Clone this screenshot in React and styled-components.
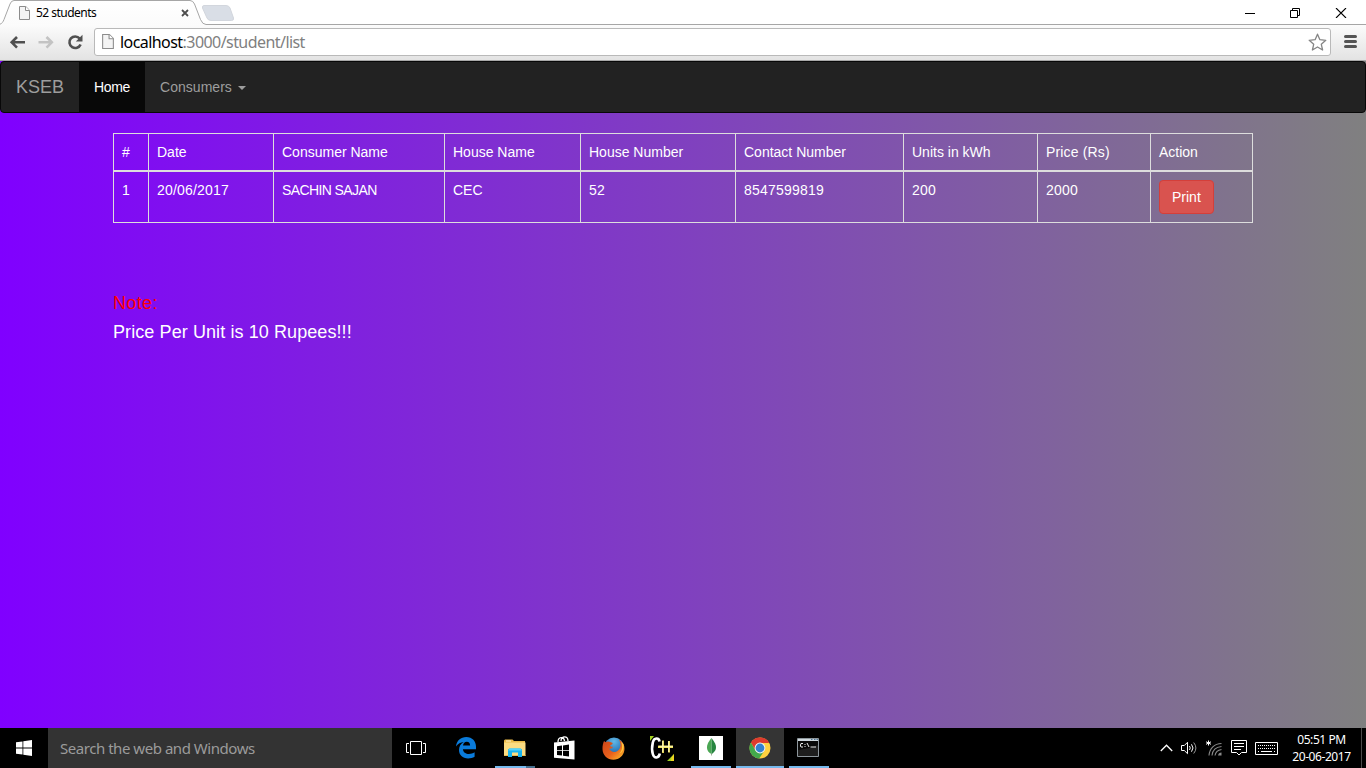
import React from "react";
import styled, { createGlobalStyle, css } from "styled-components";

const ui = `"Noto Sans", "Open Sans", sans-serif`;

const GlobalStyle = createGlobalStyle`
  *, *::before, *::after { box-sizing: border-box; }
  html, body { margin: 0; padding: 0; }
  body { overflow: hidden; font: 14px/20px "Liberation Sans", Arial, sans-serif; }
  svg { display: block; flex: none; }
`;

const Screen = styled.div`
  width: 1366px;
  height: 768px;
  display: flex;
  flex-direction: column;
  overflow: hidden;
`;

/* ---------- browser frame ---------- */

const TabStrip = styled.header`
  height: 24px;
  flex: none;
  display: flex;
  background: #fff;
  position: relative;
`;

const TabShape = styled.svg`
  position: absolute;
  left: 0;
  top: 0;
`;

const Tab = styled.div`
  position: relative;
  width: 1236px;
  height: 26px;
  display: flex;
  align-items: center;
  padding-left: 19px;
`;

const TabTitle = styled.span`
  font: 12px/16px ${ui};
  letter-spacing: -0.53px;
  color: #000;
  width: 145px;
  margin-left: 6px;
`;

const WindowControls = styled.div`
  position: relative;
  display: flex;
  align-items: center;
  height: 26px;
  padding-left: 9px;
  gap: 35px;
`;

const Toolbar = styled.div`
  height: 37px;
  flex: none;
  display: flex;
  align-items: center;
  padding: 0 9px 1px 9px;
  background: linear-gradient(#fcfcfc, #e3e3e3);
  border-bottom: 1px solid #a9a9a9;
`;

const NavIcons = styled.div`
  display: flex;
  gap: 13px;
  width: 85px;
  position: relative;
`;

const AddressBar = styled.div`
  width: 1237px;
  height: 28px;
  display: flex;
  align-items: center;
  padding: 0 3px 0 7px;
  border: 1px solid #b9b9b9;
  border-radius: 3px;
  background: #fff;
`;

const Url = styled.span`
  flex: 1;
  margin-left: 6px;
  font: 16px/22px ${ui};
  letter-spacing: -0.56px;
  color: #808080;
  b { font-weight: 400; color: #000; }
`;

const MenuIcon = styled.svg`
  margin-left: 13px;
`;

/* ---------- web page ---------- */

const Page = styled.main`
  flex: 1;
  background: linear-gradient(to right, #8000ff, #808080);
  color: #fff;
`;

const Navbar = styled.nav`
  height: 52px;
  display: flex;
  background: #222;
  border: 1px solid #080808;
  border-radius: 4px;
  margin-bottom: 20px;
`;

const Brand = styled.span`
  padding: 15px;
  font-size: 18px;
  line-height: 20px;
  color: #9d9d9d;
`;

const NavItem = styled.span`
  display: flex;
  align-items: center;
  padding: 0 15px;
  letter-spacing: ${(p) => (p.$active ? "-0.34px" : "0.03px")};
  color: ${(p) => (p.$active ? "#fff" : "#9d9d9d")};
  background: ${(p) => (p.$active ? "#080808" : "transparent")};
`;

const Caret = styled.i`
  margin: 2px 0 0 6px;
  border-top: 4px solid currentColor;
  border-left: 4px solid transparent;
  border-right: 4px solid transparent;
`;

const Container = styled.div`
  width: 1140px;
  margin: 0 auto;
`;

const Table = styled.table`
  table-layout: fixed;
  width: 1140px;
  border-spacing: 0;
  margin-bottom: 70px;
`;

const cell = css`
  padding: 8px;
  border: 0 solid #ddd;
  border-left-width: 1px;
  text-align: left;
  vertical-align: top;
  font-weight: 400;
  letter-spacing: ${(p) => p.$tracking || 0}px;
  &:last-child { border-right-width: 1px; }
`;

const HeadCell = styled.th`
  ${cell}
  width: ${(p) => p.$width}px;
  border-top-width: 1px;
  border-bottom-width: 2px;
`;

const Cell = styled.td`
  ${cell}
  border-bottom-width: 1px;
`;

const PrintButton = styled.button`
  display: block;
  height: 34px;
  padding: 6px 12px;
  font: inherit;
  color: #fff;
  background: #d9534f;
  border: 1px solid #d43f3a;
  border-radius: 4px;
`;

const Note = styled.p`
  margin: 0 0 9px;
  font-size: 18px;
  line-height: 20px;
  letter-spacing: ${(p) => (p.$alert ? 0.35 : 0.09)}px;
  color: ${(p) => (p.$alert ? "red" : "#fff")};
`;

/* ---------- taskbar ---------- */

const Taskbar = styled.footer`
  height: 40px;
  flex: none;
  display: flex;
  background: #000;
`;

const TaskButton = styled.div`
  width: 48px;
  height: 40px;
  display: flex;
  align-items: center;
  justify-content: center;
  position: relative;
  background: ${(p) => (p.$active ? "#343434" : "transparent")};
  &::after {
    content: "";
    display: ${(p) => (p.$open ? "block" : "none")};
    position: absolute;
    bottom: 0;
    left: ${(p) => (p.$active ? 0 : 4)}px;
    right: ${(p) => (p.$active ? 0 : 4)}px;
    height: 2px;
    background: ${(p) =>
      p.$stacked ? "linear-gradient(to right, #76b9ed 31px, #46708f 31px)" : "#76b9ed"};
  }
`;

const Search = styled.div`
  width: 344px;
  padding-left: 12px;
  font: 15px/41px ${ui};
  letter-spacing: -0.46px;
  color: #9b9b9b;
  background: #333;
`;

const Apps = styled.div`
  display: flex;
  gap: 1px;
  margin-left: 2px;
`;

const Tray = styled.div`
  margin-left: auto;
  display: flex;
  align-items: center;
  gap: 8px;
`;

const Clock = styled.div`
  width: 71px;
  font: 12px/17px ${ui};
  letter-spacing: -0.42px;
  text-align: center;
  color: #fff;
  white-space: nowrap;
  padding-bottom: 1px;
`;

const ShowDesktop = styled.div`
  width: 5px;
  height: 40px;
  margin-left: -4px;
  border-left: 1px solid #4a4a4a;
`;

const PageIcon = ({ w = 11, h = 14 }) => (
  <svg width={w} height={h} viewBox="0 0 11 14">
    <path d="M.5.5h6.300l3.700 3.700v9.300H.5z" fill="#f4f4f4" stroke="#8c8c8c" />
    <path d="M6.500.5v4h4" fill="#fff" stroke="#8c8c8c" />
  </svg>
);

const columns = [
  { name: "#", width: 35, value: "1" },
  { name: "Date", width: 125, value: "20/06/2017", tracking: 0.2 },
  { name: "Consumer Name", width: 171, value: "SACHIN SAJAN", tracking: -0.6 },
  { name: "House Name", width: 136, value: "CEC" },
  { name: "House Number", width: 155, value: "52", tracking: 0.2 },
  { name: "Contact Number", width: 168, value: "8547599819", tracking: 0.2 },
  { name: "Units in kWh", width: 134, value: "200", tracking: 0.2 },
  { name: "Price (Rs)", width: 113, value: "2000", tracking: 0.2, headTracking: 0.15 },
  { name: "Action", width: 103 },
];

const WindowsLogo = () => (
  <svg width="16" height="16" viewBox="0 0 16 16" fill="#fff">
    <path d="M0 2.300l6.500-.9v6.100H0zM7.300 1.300L16 0v7.500H7.300zM0 8.400h6.500v6.200L0 13.700zM7.300 8.400H16V16l-8.700-1.200z" />
  </svg>
);

const TaskViewIcon = () => (
  <svg width="20" height="14" viewBox="0 0 20 14" fill="none" stroke="#fff">
    <path d="M4.500.5h11v13h-11zM3 2.500H.5v9H3M17 2.500h2.500v9H17" />
  </svg>
);

const EdgeIcon = () => (
  <svg width="20" height="22" viewBox="0 0 20 22">
    <path
      d="M0 9.500C.7 3.500 4.800 0 10.300 0c6 0 9.700 4.300 9.700 9.800v2.400H6.900c.3 3.200 3 4.700 6 4.700 2.200 0 4-.6 5.700-1.600v4.500c-1.900 1.100-4 1.600-6.500 1.600C6.600 21.400 3 18 3 13c0-3.500 1.700-6.300 4.700-8C4.800 5.200 1.700 6.700 0 9.500zm7-1h7.100c0-2.400-1.100-3.800-3.300-3.800-2.100 0-3.500 1.500-3.800 3.800z"
      fill="#0a7bdb"
    />
  </svg>
);

const ExplorerIcon = () => (
  <svg width="22" height="19" viewBox="0 0 22 19">
    <path d="M0 1.500L1 .5h7.500L10 2h11v4H0z" fill="#e9b949" />
    <path d="M2 1.500h5v1H2z" fill="#fff4cf" />
    <path d="M0 3.500h21.500V17H0z" fill="#fbdc82" />
    <path d="M0 16h21.500v1H0z" fill="#e8bd50" />
    <path d="M4 10.500L5.500 9.500h11l1.500 1V18h-4v-4.500H8V18H4z" fill="#18b4ef" />
    <path d="M4 11.500L5.500 9.500h11l1.500 2z" fill="#56d3fa" />
  </svg>
);

const StoreIcon = () => (
  <svg width="22" height="24" viewBox="0 0 22 24">
    <path d="M5 6C5 .5 11 .2 11.500 5M8 5C8-.5 15-.5 15 5" fill="none" stroke="#fff" strokeWidth="1.300" />
    <path d="M1 6.500L21.500 4.500v19L1 21.800z" fill="#fff" />
    <path d="M4 10.300l5-.7v4.600H4zM10 9.500l6-.9v5.600h-6zM4 15.100h5v4.500l-5-.6zM10 15.100h6v5.400l-6-.8z" fill="#000" />
  </svg>
);

const FirefoxIcon = () => (
  <svg width="23" height="23" viewBox="0 0 23 23">
    <defs>
      <linearGradient id="fox" x1="0" y1="0" x2="1" y2="1">
        <stop offset="0" stopColor="#c9441a" />
        <stop offset=".55" stopColor="#e8601c" />
        <stop offset="1" stopColor="#ffc52c" />
      </linearGradient>
      <radialGradient id="globe" cx=".5" cy=".2" r=".9">
        <stop offset="0" stopColor="#63b9e7" />
        <stop offset=".6" stopColor="#2673b7" />
        <stop offset="1" stopColor="#143a73" />
      </radialGradient>
    </defs>
    <circle cx="12" cy="10.500" r="10" fill="url(#globe)" />
    <path
      d="M2 4l1.700 1.200C5 4.200 7 4.200 8.200 5.100L10.700 6c-.2 1.500-1.400 1.800-2.700 2.500.5 1.100 1.500 1.500 3 1.300-.6 1.800-2.200 2.200-3.800 1.800 1.200 3.400 5.500 4.600 8.600 2.200 3.200-2.600 3.500-7.300 1.200-11.100C21 4.700 23 8.300 22.400 13c-.8 6-5.400 9.700-11 9.700C5.300 22.700.6 18.200.5 12 .4 9 1 6 2 4z"
      fill="url(#fox)"
    />
    <path d="M19 5c1.800 4 1.400 9-2 12 3.800-1.500 5.300-5.700 4.600-9-.4-1.300-1.300-2.400-2.600-3z" fill="#ffc73a" />
  </svg>
);

const CppIcon = () => (
  <svg width="26" height="25" viewBox="0 0 26 25">
    <path d="M1 0h4L1 5zM25 18v7h-7z" fill="#a3d321" />
    <path d="M10.500 5.500C10 1.500 5 1 3.800 6.500c-1 4.500-1 8 0 11.500 1.500 5 6 4.500 7-.5" fill="none" stroke="#fff" strokeWidth="2.600" />
    <path d="M9 10.800h15" stroke="#f5e65b" strokeWidth="2.400" />
    <path d="M14 4.500V17M20 5v11.500" stroke="#f5e65b" strokeWidth="1.800" />
    <path d="M10 10.300h14M19.700 5v11M13.700 5v11" stroke="#fffbd0" strokeWidth=".8" />
    <path d="M22.500 21.500L25 18v7h-3z" fill="#f1d521" />
  </svg>
);

const MongoIcon = () => (
  <svg width="24" height="24" viewBox="0 0 24 24">
    <path d="M0 0h24v24H0z" fill="#fff" />
    <path d="M12.500 2C9 6.500 7.800 9 8 12c.2 2.700 2 5 4.500 6z" fill="#4aa653" />
    <path d="M12.500 2c3.400 4.200 4.800 6.900 4.500 10-.3 2.600-2.300 5-4.500 6.200z" fill="#278540" />
    <path d="M12.500 17.500v2" stroke="#8c9a80" strokeWidth=".8" />
  </svg>
);

const ChromeIcon = () => (
  <svg width="22" height="22" viewBox="0 0 22 22">
    <circle cx="11" cy="11" r="10.500" fill="#ffd13f" />
    <path d="M1.900 5.500A10.500 10.500 0 0 1 20.200 6H11L6.200 13z" fill="#df3b2e" />
    <path d="M1.900 5.500A10.500 10.500 0 0 0 10.200 21.500L15.500 13.500 6.500 13.500z" fill="#43a84b" />
    <circle cx="11" cy="11" r="5.400" fill="#f4f4f4" />
    <circle cx="11" cy="11" r="4.400" fill="#3481d1" />
  </svg>
);

const ConsoleIcon = () => (
  <svg width="24" height="20" viewBox="0 0 24 20">
    <path d="M.5.500h21v18H.5z" fill="#080808" stroke="#8d969c" />
    <path d="M1 1h20v2H1z" fill="#cfd8de" />
    <path d="M14 1.500h1.500M17 1.500h1.500M19.500 1.500H21" stroke="#4f7798" />
    <path d="M6 5.500H4L3.500 7v1L4 9h2M8 6v1M8 8v1M10 5l2 4M13.500 9H19" stroke="#e8e8e8" fill="none" />
    <path d="M1 12C7 11 15 10 21 7v11H1z" fill="#fff" opacity=".09" />
  </svg>
);

export default function App() {
  return (
    <Screen>
      <GlobalStyle />
      <TabStrip>
        <TabShape width="1366" height="25" viewBox="0 0 1366 25">
          <defs>
            <linearGradient id="tab" x1="0" y1="0" x2="0" y2="1">
              <stop offset="0" stopColor="#fff" />
              <stop offset="1" stopColor="#fbfbfb" />
            </linearGradient>
          </defs>
          <path d="M0 24.500C2 24 3 22 4 19.500L10 4Q11.300.5 14 .5H190Q193 .5 194.500 4L200.500 19.500Q202.500 24.500 206 24.500z" fill="url(#tab)" />
          <path d="M0 24.200C2 23.500 3 22 4 19.500L10 4Q11.300.5 14 .5H190Q193 .5 194.500 4L200.500 19.500Q202.500 24.500 206 24.500H1366" fill="none" stroke="#a6a6a6" />
          <path d="M204 5.500H226Q229 5.500 230 8L233.500 18Q234 20.500 231.500 20.500H211Q208 20.500 207 18L202.500 8Q202 5.500 204 5.500z" fill="#d9dee6" stroke="#d2d6dd" />
        </TabShape>
        <Tab>
          <PageIcon />
          <TabTitle>52 students</TabTitle>
          <svg width="8" height="8" viewBox="0 0 8 8" stroke="#4d4d4d" strokeWidth="1.800">
            <path d="M1 1l6 6M7 1L1 7" />
          </svg>
        </Tab>
        <WindowControls>
          <svg width="10" height="10"><path d="M0 5.500h10" stroke="#000" /></svg>
          <svg width="10" height="10" fill="none" stroke="#000">
            <path d="M.5 2.500h7v7h-7zM2.500 2.500v-2h7v7h-2" />
          </svg>
          <svg width="12" height="10" stroke="#000" strokeWidth="1.100"><path d="M1 0l10 10M11 0L1 10" /></svg>
        </WindowControls>
      </TabStrip>

      <Toolbar>
        <NavIcons>
          <svg width="16" height="16" viewBox="0 0 16 16" fill="none" stroke="#505050" strokeWidth="2.600">
            <path d="M8 3L2.700 8.300 8 13.600M3 8.300h13" />
          </svg>
          <svg width="16" height="16" viewBox="0 0 16 16" fill="none" stroke="#c3c3c3" strokeWidth="2.600">
            <path d="M8.500 3L13.800 8.300 8.500 13.600M13.500 8.300H.5" />
          </svg>
          <svg width="16" height="16" viewBox="0 0 16 16">
            <path d="M12.700 4.500A5.800 5.800 0 1 0 13.600 10.500" fill="none" stroke="#505050" strokeWidth="2.600" />
            <path d="M15.500.8v6.700H8.800z" fill="#505050" />
          </svg>
        </NavIcons>
        <AddressBar>
          <PageIcon w={12} h={15} />
          <Url><b>localhost</b>:3000/student/list</Url>
          <svg width="19" height="18" viewBox="0 0 19 18">
            <path d="M9.500 1.200l2.400 5.500 5.900.6-4.500 4 1.300 5.700-5.100-3-5.100 3 1.300-5.700-4.500-4 5.900-.6z" fill="#fff" stroke="#858585" strokeWidth="1.300" strokeLinejoin="round" />
          </svg>
        </AddressBar>
        <MenuIcon width="13" height="13" viewBox="0 0 13 13" stroke="#555" strokeWidth="3" strokeLinecap="round">
          <path d="M1.500 1.500h10M1.500 6.500h10M1.500 11.500h10" />
        </MenuIcon>
      </Toolbar>

      <Page>
        <Navbar>
          <Brand>KSEB</Brand>
          <NavItem $active>Home</NavItem>
          <NavItem>Consumers<Caret /></NavItem>
        </Navbar>
        <Container>
          <Table>
            <thead>
              <tr>
                {columns.map((c) => (
                  <HeadCell key={c.name} $width={c.width} $tracking={c.headTracking}>{c.name}</HeadCell>
                ))}
              </tr>
            </thead>
            <tbody>
              <tr>
                {columns.map((c) => (
                  <Cell key={c.name} $tracking={c.tracking}>
                    {c.value ?? <PrintButton>Print</PrintButton>}
                  </Cell>
                ))}
              </tr>
            </tbody>
          </Table>
          <Note $alert>Note:</Note>
          <Note>Price Per Unit is 10 Rupees!!!</Note>
        </Container>
      </Page>

      <Taskbar>
        <TaskButton><WindowsLogo /></TaskButton>
        <Search>Search the web and Windows</Search>
        <TaskButton><TaskViewIcon /></TaskButton>
        <Apps>
          <TaskButton><EdgeIcon /></TaskButton>
          <TaskButton $open $stacked><ExplorerIcon /></TaskButton>
          <TaskButton><StoreIcon /></TaskButton>
          <TaskButton><FirefoxIcon /></TaskButton>
          <TaskButton><CppIcon /></TaskButton>
          <TaskButton $open><MongoIcon /></TaskButton>
          <TaskButton $open $active><ChromeIcon /></TaskButton>
          <TaskButton $open><ConsoleIcon /></TaskButton>
        </Apps>
        <Tray>
          <svg width="13" height="8" fill="none" stroke="#fff" strokeWidth="1.300"><path d="M.8 7L6.500 1.200 12.200 7" /></svg>
          <svg width="17" height="14" viewBox="0 0 17 14" fill="none" stroke="#fff">
            <path d="M.5 4.500h2.800L6.500 1.300v11.400L3.300 9.500H.5zM8.500 5q1.500 2 0 4M10.500 3.300q3 3.700 0 7.400" />
            <path d="M12.700 1.500q4.400 5.500 0 11" stroke="#999" />
          </svg>
          <svg width="17" height="17" viewBox="0 0 17 17" fill="none">
            <path d="M2.500.5v5M0 1.800l5 2.500M5 1.800L0 4.300" stroke="#fff" />
            <path d="M3 15.500C3.500 8.500 8.500 3.500 15.500 3.500M6 15.500C6.500 10.500 10 7 15.500 6.500M9 15.500c.5-3.200 3-5.500 6.500-6" stroke="#8a8a8a" strokeWidth="1.100" />
            <path d="M12 15.500q.5-2.800 3.500-3v3z" fill="#8a8a8a" />
          </svg>
          <svg width="16" height="16" viewBox="0 0 16 16" fill="none" stroke="#fff">
            <path d="M.5.5h15v12h-5l-2.500 2.500-2.500-2.500h-5zM3 3.500h10M3 6.500h10M3 9.500h7" />
          </svg>
          <svg width="23" height="13" viewBox="0 0 23 13" fill="none" stroke="#fff">
            <path d="M.5.5h22v12H.5z" />
            <path d="M3 3.500h17M3 6.500h17" strokeDasharray="1 1" />
            <path d="M3 9.500h1M6 9.500h11M19 9.500h1" />
          </svg>
          <Clock>05:51 PM<br />20-06-2017</Clock>
          <ShowDesktop />
        </Tray>
      </Taskbar>
    </Screen>
  );
}
